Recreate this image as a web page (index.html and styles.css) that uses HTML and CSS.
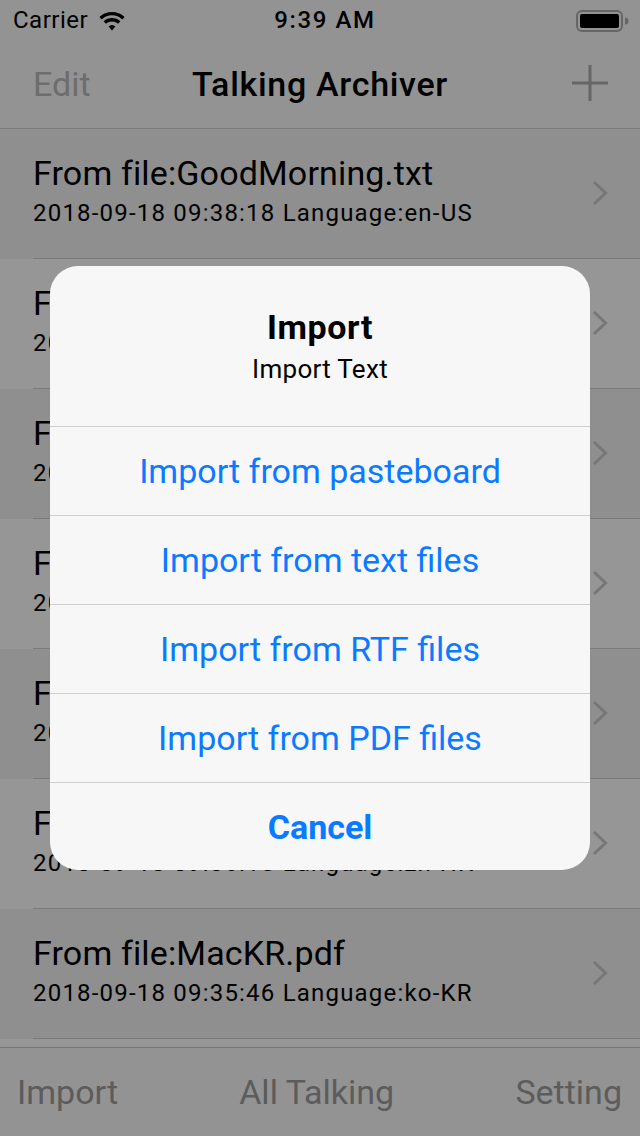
FILE: index.html
```html
<!DOCTYPE html>
<html>
<head>
<meta charset="utf-8">
<link rel="stylesheet" href="styles.css">
</head>
<body>
<div class="screen">
  <div class="status">
    <div class="status-left">
      <span class="carrier">Carrier</span>
      <svg class="wifi" width="28" height="21" viewBox="0 0 28 21">
        <path d="M14 20.5 L10.6 16.6 A5 5 0 0 1 17.4 16.6 Z" fill="#000"/>
        <path d="M6.8 12.6 A10.5 10.5 0 0 1 21.2 12.6" stroke="#000" stroke-width="3.4" fill="none"/>
        <path d="M2.6 8.2 A16.5 16.5 0 0 1 25.4 8.2" stroke="#000" stroke-width="3.4" fill="none"/>
      </svg>
    </div>
    <div class="status-time">9:39 AM</div>
    <div class="status-right">
      <svg width="54" height="22" viewBox="0 0 54 22">
        <rect x="1" y="1" width="45" height="20" rx="5" ry="5" fill="none" stroke="#666" stroke-width="2"/>
        <rect x="4" y="4" width="39" height="14" rx="2" ry="2" fill="#000"/>
        <path d="M49 7.5 A3.5 3.5 0 0 1 49 14.5 Z" fill="#666"/>
      </svg>
    </div>
  </div>
  <div class="navbar">
    <span class="nav-edit">Edit</span>
    <span class="nav-title">Talking Archiver</span>
    <svg class="nav-plus" width="36" height="36" viewBox="0 0 36 36">
      <path d="M18 0 V36 M0 18 H36" stroke="#666" stroke-width="3"/>
    </svg>
  </div>
  <div class="list">
    <div class="row dark">
      <div class="row-text">
        <div class="row-title">From file:GoodMorning.txt</div>
        <div class="row-sub">2018-09-18 09:38:18 Language:en-US</div>
      </div>
      <svg class="chev" width="16" height="26" viewBox="0 0 16 26"><path d="M2 2 L13.5 13 L2 24" stroke="#777" stroke-width="3" fill="none"/></svg>
    </div>
    <div class="row light">
      <div class="row-text">
        <div class="row-title">From file:Hello.txt</div>
        <div class="row-sub">2018-09-18 09:37:52 Language:en-US</div>
      </div>
      <svg class="chev" width="16" height="26" viewBox="0 0 16 26"><path d="M2 2 L13.5 13 L2 24" stroke="#777" stroke-width="3" fill="none"/></svg>
    </div>
    <div class="row dark">
      <div class="row-text">
        <div class="row-title">From file:Sample.rtf</div>
        <div class="row-sub">2018-09-18 09:37:30 Language:en-US</div>
      </div>
      <svg class="chev" width="16" height="26" viewBox="0 0 16 26"><path d="M2 2 L13.5 13 L2 24" stroke="#777" stroke-width="3" fill="none"/></svg>
    </div>
    <div class="row light">
      <div class="row-text">
        <div class="row-title">From file:Sample.pdf</div>
        <div class="row-sub">2018-09-18 09:37:02 Language:en-US</div>
      </div>
      <svg class="chev" width="16" height="26" viewBox="0 0 16 26"><path d="M2 2 L13.5 13 L2 24" stroke="#777" stroke-width="3" fill="none"/></svg>
    </div>
    <div class="row dark">
      <div class="row-text">
        <div class="row-title">From file:MacJP.pdf</div>
        <div class="row-sub">2018-09-18 09:36:40 Language:ja-JP</div>
      </div>
      <svg class="chev" width="16" height="26" viewBox="0 0 16 26"><path d="M2 2 L13.5 13 L2 24" stroke="#777" stroke-width="3" fill="none"/></svg>
    </div>
    <div class="row light">
      <div class="row-text">
        <div class="row-title">From file:MacZH.pdf</div>
        <div class="row-sub">2018-09-18 09:36:15 Language:zh-HK</div>
      </div>
      <svg class="chev" width="16" height="26" viewBox="0 0 16 26"><path d="M2 2 L13.5 13 L2 24" stroke="#777" stroke-width="3" fill="none"/></svg>
    </div>
    <div class="row dark">
      <div class="row-text">
        <div class="row-title">From file:MacKR.pdf</div>
        <div class="row-sub">2018-09-18 09:35:46 Language:ko-KR</div>
      </div>
      <svg class="chev" width="16" height="26" viewBox="0 0 16 26"><path d="M2 2 L13.5 13 L2 24" stroke="#777" stroke-width="3" fill="none"/></svg>
    </div>
    <div class="row light"></div>
  </div>
  <div class="tabbar">
    <span class="tab">Import</span>
    <span class="tab">All Talking</span>
    <span class="tab">Setting</span>
  </div>

  <div class="alert">
    <div class="alert-head">
      <div class="alert-title">Import</div>
      <div class="alert-msg">Import Text</div>
    </div>
    <div class="alert-btn">Import from pasteboard</div>
    <div class="alert-btn">Import from text files</div>
    <div class="alert-btn">Import from RTF files</div>
    <div class="alert-btn">Import from PDF files</div>
    <div class="alert-btn cancel">Cancel</div>
  </div>
</div>
</body>
</html>
```

FILE: styles.css
```css
* { box-sizing: border-box; }
html, body { margin: 0; padding: 0; }
body {
  width: 640px;
  height: 1136px;
  overflow: hidden;
  font-family: Roboto, "Liberation Sans", sans-serif;
  background: #939393;
}
.screen {
  position: relative;
  width: 640px;
  height: 1136px;
  display: flex;
  flex-direction: column;
  background: #939393;
}
.status {
  height: 40px;
  display: flex;
  align-items: center;
  justify-content: space-between;
  padding: 0 10px 0 13px;
  position: relative;
}
.status-left { display: flex; align-items: center; gap: 10px; width: 150px; }
.carrier { font-size: 24px; color: #000; letter-spacing: 0.5px; }
.wifi { margin-top: 1px; }
.status-time {
  position: absolute;
  left: 0; right: 0;
  padding-left: 10px;
  text-align: center;
  font-size: 24px;
  font-weight: 500;
  letter-spacing: 1.6px;
  color: #000;
}
.status-right { display: flex; align-items: center; width: 54px; margin-top: 2px; }
.navbar {
  height: 89px;
  border-bottom: 1px solid #7a7a7a;
  display: flex;
  align-items: center;
  justify-content: space-between;
  padding: 0 32px 0 33px;
  position: relative;
}
.nav-edit { font-size: 34px; color: #6d6d6d; }
.nav-title {
  position: absolute;
  left: 0; right: 0;
  text-align: center;
  font-size: 34px;
  font-weight: 500;
  letter-spacing: 0.7px;
  color: #000;
}
.nav-plus { margin-top: -2px; }
.list {
  flex: 1;
  overflow: hidden;
}
.row {
  height: 130px;
  display: flex;
  align-items: center;
  padding-left: 33px;
  padding-right: 32px;
  position: relative;
}
.row::after {
  content: "";
  position: absolute;
  left: 33px; right: 0; bottom: 0;
  height: 1px;
  background: #7a7a7a;
}
.row.dark { background: #8f8f8f; }
.row.light { background: #969696; }
.row-text { flex: 1; align-self: flex-start; padding-top: 25px; }
.row-title { font-size: 34px; line-height: 38px; color: #000; letter-spacing: 0.15px; }
.row-sub { font-size: 24px; line-height: 28px; color: #000; margin-top: 7px; letter-spacing: 1.2px; }
.chev { margin-top: -2px; }
.tabbar {
  height: 89px;
  border-top: 1px solid #777;
  display: flex;
  align-items: center;
  justify-content: space-between;
  padding: 0 18px 0 17px;
}
.tab { font-size: 34px; color: #5c5c5c; }

.alert {
  position: absolute;
  left: 50px;
  top: 266px;
  width: 540px;
  background: #f7f7f7;
  border-radius: 28px;
  overflow: hidden;
}
.alert-head {
  height: 160px;
  padding-top: 41px;
  text-align: center;
}
.alert-title { font-size: 34px; line-height: 40px; font-weight: 700; letter-spacing: 0.6px; color: #000; }
.alert-msg { font-size: 26px; line-height: 30px; color: #000; margin-top: 7px; letter-spacing: 0.3px; }
.alert-btn {
  height: 89px;
  border-top: 1px solid #cfcfd3;
  display: flex;
  align-items: center;
  justify-content: center;
  font-size: 34px;
  color: #0a7aff;
}
.alert-btn.cancel { font-weight: 700; height: 88px; }
```
